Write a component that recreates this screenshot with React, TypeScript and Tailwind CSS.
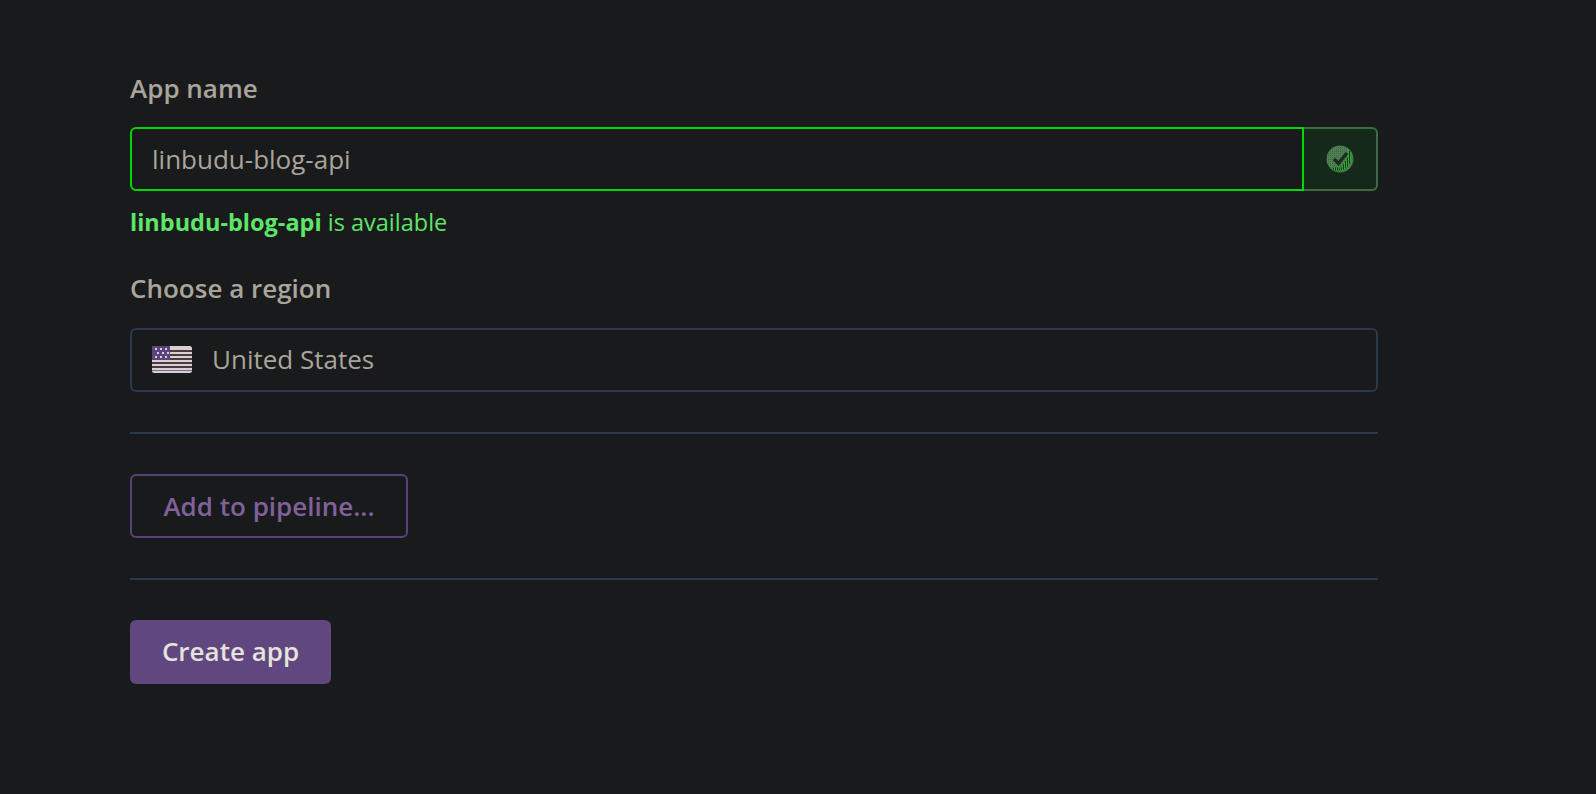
const font = "font-['Open_Sans','Noto_Sans',sans-serif]";

const CheckBadge = () => (
  <svg width="28" height="28" viewBox="0 0 28 28">
    <defs>
      <pattern id="dither" width="2" height="2" patternUnits="userSpaceOnUse">
        <rect width="2" height="2" fill="#173a1c" />
        <rect width="1" height="2" fill="#1fb526" />
      </pattern>
      <pattern id="grain" width="2" height="2" patternUnits="userSpaceOnUse">
        <rect width="2" height="2" fill="#4f7f52" />
        <rect width="1" height="1" fill="#3c6a40" />
      </pattern>
    </defs>
    <circle cx="14" cy="14" r="13.5" fill="url(#grain)" />
    <path d="M22 3.5a13.5 13.5 0 0 1-17 20.5l4-2 6 1 7-11z" fill="url(#dither)" />
    <path d="M8 14l4.500 4.500L21 8" fill="none" stroke="#17301b" strokeWidth="3.5" />
  </svg>
);

const Flag = () => (
  <svg width="40" height="27" viewBox="0 0 40 27">
    <rect width="40" height="27" rx="2.5" fill="#d8cfd3" />
    <rect y="4" width="40" height="2" fill="#4a3a42" />
    <rect y="8" width="40" height="2" fill="#4a3a42" />
    <rect y="12" width="40" height="2" fill="#4a3a42" />
    <rect y="16" width="40" height="2" fill="#4a3a42" />
    <rect y="20" width="40" height="2" fill="#4a3a42" />
    <rect y="24" width="40" height="1" fill="#7b6a8c" />
    <path d="M0 2.500A2.500 2.500 0 0 1 2.500 0H18v14H0z" fill="#5c4480" />
    <g fill="#d8cfd3">
      <rect x="3" y="2" width="2" height="2" />
      <rect x="8" y="2" width="2" height="2" />
      <rect x="13" y="2" width="2" height="2" />
      <rect x="5" y="6" width="2" height="2" />
      <rect x="10" y="6" width="2" height="2" />
      <rect x="15" y="6" width="2" height="2" />
      <rect x="3" y="10" width="2" height="2" />
      <rect x="8" y="10" width="2" height="2" />
      <rect x="13" y="10" width="2" height="2" />
    </g>
  </svg>
);

export default function App() {
  return (
    <div className={`${font} min-h-[794px] bg-[#181a1b] pl-[130px] pt-[72px]`}>
      <div className="w-[1248px]">
        <label className="block text-[26px] leading-[32px] font-semibold text-[#aaa59c]">App name</label>
        <div className="mt-[23px] flex h-[64px]">
          <div className="flex flex-1 items-center rounded-l-[6px] border-2 border-[#00d800] pl-[20px] text-[26px] text-[#aaa59c]">
            linbudu-blog-api
          </div>
          <div className="flex w-[74px] items-center justify-center rounded-r-[6px] border-y-2 border-r-2 border-[#3e6b41] bg-[#14291a]">
            <CheckBadge />
          </div>
        </div>
        <p className="mt-[16px] text-[23.5px] leading-[30px] text-[#5fe569]">
          <span className="font-bold">linbudu-blog-api</span> is available
        </p>
        <label className="mt-[35px] block text-[26px] leading-[32px] font-semibold text-[#aaa59c]">Choose a region</label>
        <div className="mt-[24px] flex h-[64px] items-center gap-[20px] rounded-[6px] border-2 border-[#2a3850] pb-[2px] pl-[20px] text-[26px] text-[#aaa59c]">
          <Flag />
          United States
        </div>
        <div className="mt-[40px] h-[2px] bg-[#2a3850]" />
        <button className="mt-[40px] block h-[64px] w-[278px] rounded-[6px] border-2 border-[#5a4278] text-[26px] font-semibold text-[#80619b]">
          Add to pipeline...
        </button>
        <div className="mt-[40px] h-[2px] bg-[#2a3850]" />
        <button className="mt-[40px] block h-[64px] w-[201px] rounded-[6px] bg-[#604780] pb-[2px] text-[26px] font-semibold text-[#e6e2dc]">
          Create app
        </button>
      </div>
    </div>
  );
}
